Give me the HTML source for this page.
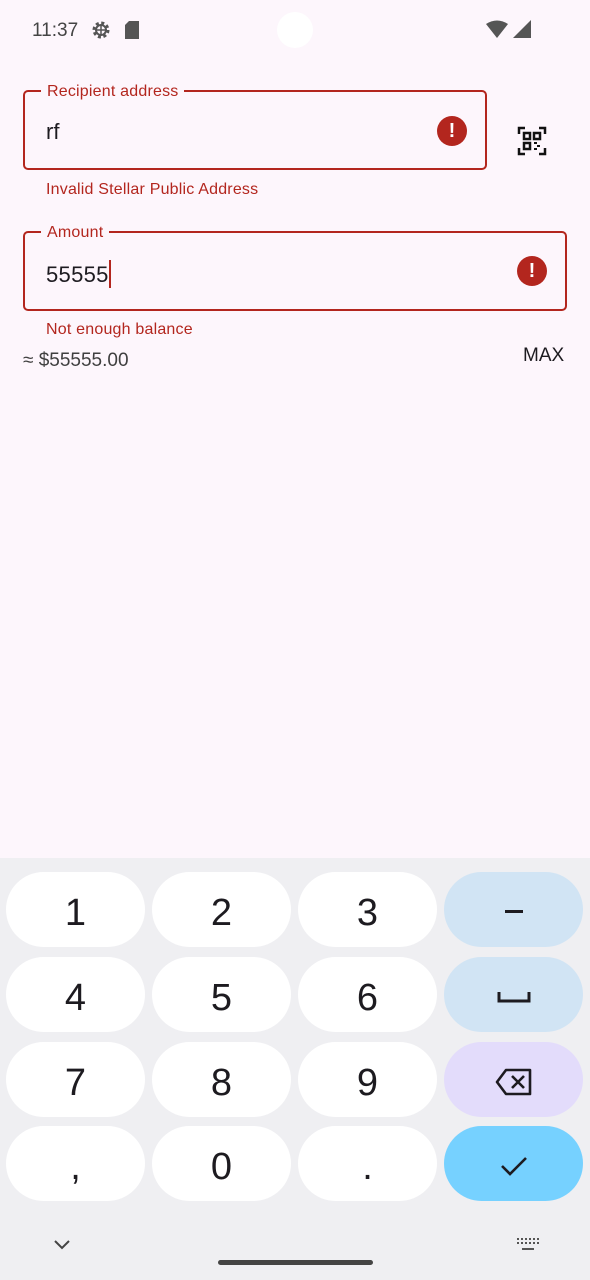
<!DOCTYPE html>
<html><head><meta charset="utf-8"><style>
*{margin:0;padding:0;box-sizing:border-box}
body{width:590px;height:1280px;background:#fdf6fc;font-family:"Liberation Sans",sans-serif;position:relative;overflow:hidden}
.abs{position:absolute}
.field{position:absolute;border:2px solid #b3261e;border-radius:5px}
.lbl{position:absolute;top:-10px;left:16px;background:#fdf6fc;padding:0 6px;color:#b3261e;font-size:16px;line-height:20px;letter-spacing:0.2px}
.err{position:absolute;width:30px;height:30px;border-radius:50%;background:#b3261e;color:#fff;font-weight:bold;font-size:20px;text-align:center;line-height:30px}
.etxt{position:absolute;color:#b3261e;font-size:16px;letter-spacing:0.2px}
.kb{position:absolute;left:0;top:858px;width:590px;height:422px;background:#efeff2}
.k{position:absolute;width:139px;height:75px;border-radius:38px;background:#fff;font-size:38px;color:#1d1b20;text-align:center;line-height:82px}
.k svg{margin-top:-6px}
</style></head><body>
<div class="abs" style="left:32px;top:20px;font-size:19px;color:#444">11:37</div>
<svg class="abs" style="left:90px;top:19px" width="22" height="22" viewBox="0 0 22 22"><circle cx="11" cy="11" r="7" fill="none" stroke="#555" stroke-width="3" stroke-dasharray="3 2.5"/><circle cx="11" cy="11" r="5" fill="none" stroke="#555" stroke-width="2"/><path d="M11 6v10M6 11h10" stroke="#555" stroke-width="1.5"/></svg>
<svg class="abs" style="left:125px;top:21px" width="16" height="18"><path d="M4 0h10v18H0V4z" fill="#555"/></svg>
<div class="abs" style="left:277px;top:12px;width:36px;height:36px;border-radius:50%;background:#fff"></div>
<svg class="abs" style="left:485px;top:20px" width="46" height="20"><path d="M1 4Q12-3 23 4L12 18z" fill="#555"/><path d="M46 0V18H28z" fill="#555"/></svg>

<div class="field" style="left:23px;top:90px;width:464px;height:80px"><div class="lbl">Recipient address</div></div>
<div class="abs" style="left:46px;top:119px;font-size:22px;color:#1d1b20">rf</div>
<div class="err" style="left:437px;top:116px">!</div>
<svg class="abs" style="left:516px;top:125px" width="32" height="32" viewBox="0 0 32 32" fill="none" stroke="#111" stroke-width="2.5"><path d="M3 9V3h6M23 3h6v6M29 23v6h-6M9 29H3v-6"/><rect x="8" y="8" width="6" height="6"/><rect x="18" y="8" width="6" height="6"/><rect x="8" y="18" width="6" height="6"/><path d="M18 18h3M21 21h3M18 24h3" stroke-width="2"/></svg>
<div class="etxt" style="left:46px;top:181px">Invalid Stellar Public Address</div>

<div class="field" style="left:23px;top:231px;width:544px;height:80px"><div class="lbl">Amount</div></div>
<div class="abs" style="left:46px;top:260px;font-size:22px;color:#1d1b20;letter-spacing:0.3px">55555<span style="display:inline-block;width:2px;height:28px;background:#b3261e;vertical-align:-6px"></span></div>
<div class="err" style="left:517px;top:256px">!</div>
<div class="etxt" style="left:46px;top:321px">Not enough balance</div>
<div class="abs" style="left:23px;top:350px;font-size:19px;color:#3f3f3f">≈ $55555.00</div>
<div class="abs" style="left:523px;top:345px;font-size:19px;color:#1d1b20">MAX</div>

<div class="kb"></div>
<div class="k" style="left:6px;top:872px">1</div>
<div class="k" style="left:152px;top:872px">2</div>
<div class="k" style="left:298px;top:872px">3</div>
<div class="k" style="left:444px;top:872px;background:#d1e4f4"><svg width="18" height="4" style="vertical-align:middle"><rect width="18" height="3" fill="#1d1b20"/></svg></div>
<div class="k" style="left:6px;top:957px">4</div>
<div class="k" style="left:152px;top:957px">5</div>
<div class="k" style="left:298px;top:957px">6</div>
<div class="k" style="left:444px;top:957px;background:#d1e4f4"><svg width="34" height="14" style="vertical-align:middle"><path d="M2 2v9h30V2" fill="none" stroke="#1d1b20" stroke-width="3"/></svg></div>
<div class="k" style="left:6px;top:1042px">7</div>
<div class="k" style="left:152px;top:1042px">8</div>
<div class="k" style="left:298px;top:1042px">9</div>
<div class="k" style="left:444px;top:1042px;background:#e3dcfb"><svg width="38" height="28" viewBox="0 0 38 28" style="vertical-align:middle"><path d="M11 2h24v24H11L2 14z" fill="none" stroke="#1d1b20" stroke-width="2.6" stroke-linejoin="round"/><path d="M17 8l12 12M29 8L17 20" stroke="#1d1b20" stroke-width="2.6"/></svg></div>
<div class="k" style="left:6px;top:1126px">,</div>
<div class="k" style="left:152px;top:1126px">0</div>
<div class="k" style="left:298px;top:1126px">.</div>
<div class="k" style="left:444px;top:1126px;background:#76d1ff"><svg width="30" height="22" viewBox="0 0 30 22" style="vertical-align:middle"><path d="M3 11l8 8L27 3" fill="none" stroke="#1d1b20" stroke-width="2.6"/></svg></div>
<svg class="abs" style="left:54px;top:1240px" width="16" height="10"><path d="M1 1l7 7 7-7" fill="none" stroke="#444" stroke-width="2"/></svg>
<svg class="abs" style="left:516px;top:1237px" width="24" height="16"><path d="M1 2h22M1 6h22" stroke="#555" stroke-width="2" stroke-dasharray="2 2"/><path d="M6 12h12" stroke="#555" stroke-width="2"/></svg>
<div class="abs" style="left:218px;top:1260px;width:155px;height:5px;border-radius:3px;background:#444"></div>
</body></html>
